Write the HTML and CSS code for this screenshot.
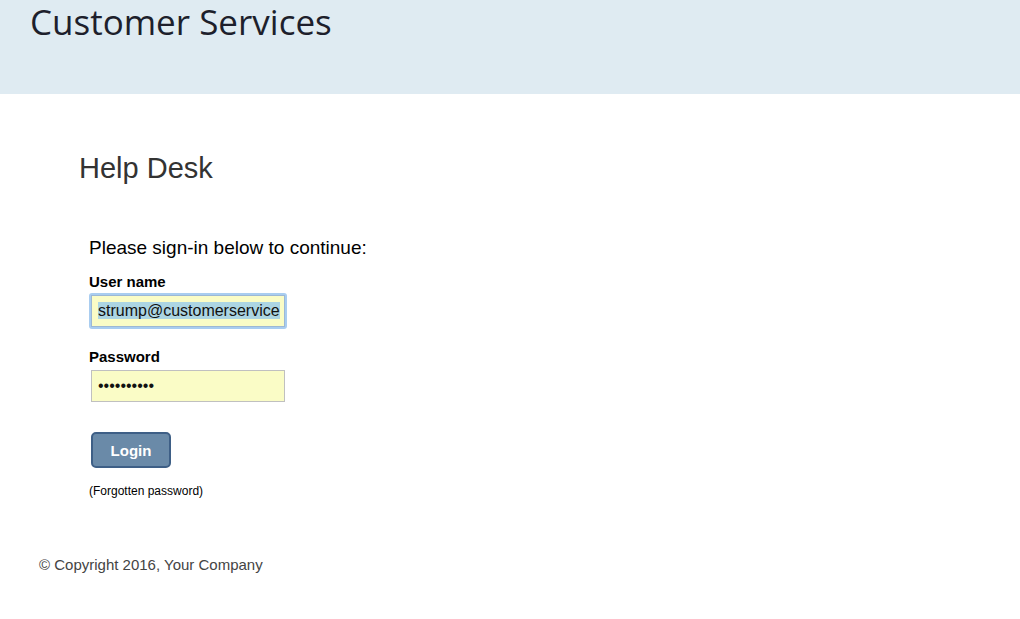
FILE: index.html
```html
<!DOCTYPE html>
<html>
<head>
<meta charset="utf-8">
<link rel="stylesheet" href="styles.css">
</head>
<body>
<header class="header">
  <h1 class="brand">Customer Services</h1>
</header>
<main class="main">
  <h2 class="page-title">Help Desk</h2>
  <form class="login-form">
    <p class="intro">Please sign-in below to continue:</p>
    <label class="field-label" for="user">User name</label>
    <div class="focus-ring">
      <div class="input"><span class="selected">strump@customerservice</span></div>
    </div>
    <label class="field-label pw-label" for="pw">Password</label>
    <div class="input plain">••••••••••</div>
    <button type="button" class="login-btn">Login</button>
    <p class="forgot">(Forgotten password)</p>
  </form>
</main>
<footer class="footer">© Copyright 2016, Your Company</footer>
</body>
</html>
```
FILE: styles.css
```css
html, body {
  margin: 0;
  padding: 0;
  background: #ffffff;
}
body {
  font-family: "Liberation Sans", Arial, sans-serif;
  color: #000;
}
.header {
  background: #dfebf2;
  height: 94px;
  padding-left: 30px;
  box-sizing: border-box;
}
.brand {
  margin: 0;
  font-family: "Open Sans", "Noto Sans", sans-serif;
  font-weight: 400;
  font-size: 35px;
  line-height: 44px;
  color: #1d1f2c;
}
.main {
  padding-left: 79px;
  padding-top: 56px;
}
.page-title {
  margin: 0;
  font-weight: 400;
  font-size: 29px;
  line-height: 36px;
  color: #333;
}
.login-form {
  margin: 0;
  padding-left: 10px;
  padding-top: 51px;
  display: flex;
  flex-direction: column;
  align-items: flex-start;
}
.intro {
  margin: 0;
  font-size: 19px;
  line-height: 22px;
}
.field-label {
  font-weight: 700;
  font-size: 15px;
  line-height: 18px;
  margin-top: 14px;
}
.pw-label {
  margin-top: 19px;
}
.focus-ring {
  margin-top: 2px;
  border: 2px solid #a9cdf0;
  border-radius: 3px;
}
.input {
  width: 194px;
  height: 32px;
  box-sizing: border-box;
  background: #fafcc6;
  border: 1px solid #c0c0c0;
  font-size: 16px;
  line-height: 30px;
  padding-left: 6px;
  white-space: nowrap;
  overflow: hidden;
  color: #111;
}
.focus-ring .input {
  border-color: #9db8d4;
}
.selected {
  background: #acd5e3;
}
.input.plain {
  margin-top: 4px;
  margin-left: 2px;
  font-size: 16px;
  line-height: 29px;
}
.login-btn {
  margin-top: 30px;
  margin-left: 2px;
  width: 80px;
  height: 36px;
  background: #6a8aa8;
  border: 2px solid #3e5f86;
  border-radius: 5px;
  color: #fff;
  font-family: "Liberation Sans", Arial, sans-serif;
  font-weight: 700;
  font-size: 15px;
  padding: 0;
}
.forgot {
  margin: 16px 0 0 0;
  font-size: 12px;
  line-height: 14px;
}
.footer {
  margin-top: 58px;
  padding-left: 39px;
  font-size: 15px;
  line-height: 18px;
  color: #444;
}
```
